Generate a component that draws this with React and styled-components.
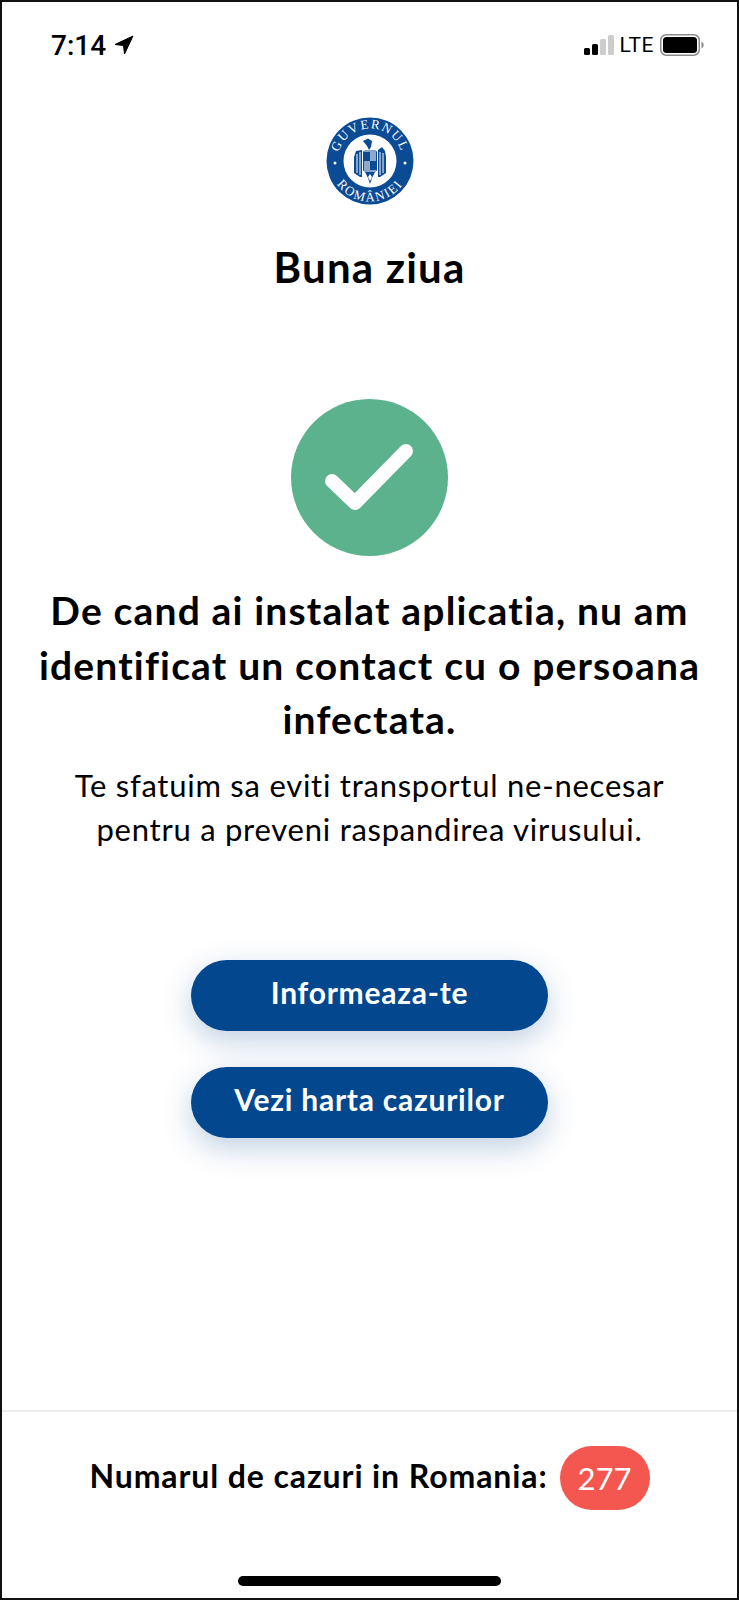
import React from "react";
import styled, { createGlobalStyle } from "styled-components";

const GlobalStyle = createGlobalStyle`
  html, body { margin: 0; padding: 0; background: #fff; }
  body { font-family: "Lato", "Open Sans", sans-serif; color: #000; }
`;

const Screen = styled.div`
  box-sizing: border-box;
  width: 739px;
  height: 1600px;
  border: 2px solid #111;
  display: flex;
  flex-direction: column;
  align-items: center;
  background: #fff;
  overflow: hidden;
`;

const StatusBar = styled.div`
  align-self: stretch;
  height: 54px;
  margin-top: 16px;
  padding: 0 33px 0 49px;
  display: flex;
  align-items: center;
  justify-content: space-between;
`;

const Clock = styled.div`
  display: flex;
  align-items: center;
  gap: 8px;
  font-family: "Roboto", sans-serif;
  font-size: 28px;
  font-weight: 500;
`;

const StatusRight = styled.div`
  display: flex;
  align-items: center;
  gap: 6px;
`;

const Signal = styled.div`
  display: flex;
  align-items: flex-end;
  gap: 2px;
  height: 20px;
`;

const SignalBar = styled.span`
  width: 6px;
  height: ${(p) => p.$h}px;
  border-radius: 1.5px;
  background: ${(p) => (p.$on ? "#000" : "#ccc")};
`;

const Lte = styled.span`
  font-family: "Roboto", sans-serif;
  font-size: 21px;
  letter-spacing: 0.5px;
`;

const Emblem = styled.svg`
  display: block;
  width: 88px;
  height: 88px;
  margin-top: 45px;
`;

const Title = styled.h1`
  margin: 36px 0 0;
  font-size: 42px;
  line-height: 52px;
  font-weight: 700;
  letter-spacing: 1.2px;
  text-align: center;
`;

const CheckBadge = styled.svg`
  display: block;
  width: 157px;
  height: 157px;
  margin-top: 106px;
`;

const Headline = styled.h2`
  margin: 27px 0 0;
  width: 715px;
  font-size: 39px;
  line-height: 54.5px;
  font-weight: 700;
  letter-spacing: 1.17px;
  text-align: center;
`;

const Advice = styled.p`
  margin: 16px 0 0;
  width: 625px;
  font-size: 31px;
  line-height: 44px;
  font-weight: 400;
  letter-spacing: 0.75px;
  text-align: center;
`;

const Buttons = styled.div`
  margin-top: 109px;
  display: flex;
  flex-direction: column;
  gap: 36px;
`;

const ActionButton = styled.button`
  width: 357px;
  height: 71px;
  padding: 0 0 6px;
  border: 0;
  border-radius: 36px;
  background: #03478f;
  color: #fff;
  font-family: inherit;
  font-size: 30px;
  font-weight: 700;
  letter-spacing: 0.75px;
  box-shadow: 0 10px 30px rgba(3, 71, 143, 0.25);
`;

const Footer = styled.div`
  margin-top: auto;
  align-self: stretch;
  height: 186px;
  border-top: 2px solid #ececec;
  display: flex;
  flex-direction: column;
  align-items: center;
`;

const CasesRow = styled.div`
  margin-top: 34px;
  display: flex;
  align-items: center;
  gap: 12px;
`;

const CasesLabel = styled.span`
  padding-bottom: 6px;
  font-size: 32px;
  font-weight: 700;
  letter-spacing: 0.9px;
`;

const CasesBadge = styled.span`
  width: 90px;
  height: 64px;
  border-radius: 32px;
  background: #f4574f;
  color: #fff;
  font-size: 31px;
  display: flex;
  align-items: center;
  justify-content: center;
`;

const HomeBar = styled.div`
  margin-top: 66px;
  width: 263px;
  height: 10px;
  border-radius: 5px;
  background: #000;
`;

const LocationArrow = () => (
  <svg width="20" height="20" viewBox="0 0 20 20">
    <path d="M19 1 L1 9.5 L9.5 10.5 L10.5 19 Z" fill="#000" stroke="#000" strokeWidth="1" strokeLinejoin="round" />
  </svg>
);

const Battery = () => (
  <svg width="44" height="22" viewBox="0 0 44 22">
    <rect x="0.75" y="0.75" width="38.5" height="20.5" rx="5.5" fill="none" stroke="#8a8a8a" strokeWidth="1.5" />
    <rect x="3" y="3" width="34" height="16" rx="3.5" fill="#000" />
    <path d="M41.5 7.5 C43.2 8.2 43.6 9.5 43.6 11 C43.6 12.5 43.2 13.8 41.5 14.5 Z" fill="#8a8a8a" />
  </svg>
);

const blue = "#0b4a94";

const GovEmblem = () => (
  <Emblem viewBox="0 0 88 88">
    <defs>
      <path id="arcTop" d="M 11.5 44 A 32.5 32.5 0 0 1 76.5 44" />
      <path id="arcBottom" d="M 3.5 44 A 40.5 40.5 0 0 0 84.5 44" />
    </defs>
    <circle cx="44" cy="44" r="43.5" fill={blue} />
    <circle cx="44" cy="44" r="26.5" fill="#fff" />
    <text fontFamily="Liberation Serif, serif" fontSize="13" fill="#fff" letterSpacing="1.6">
      <textPath href="#arcTop" startOffset="50%" textAnchor="middle">GUVERNUL</textPath>
    </text>
    <text fontFamily="Liberation Serif, serif" fontSize="13" fill="#fff" letterSpacing="1.6">
      <textPath href="#arcBottom" startOffset="50%" textAnchor="middle">ROMÂNIEI</textPath>
    </text>
    <circle cx="9" cy="46" r="1.5" fill="#fff" />
    <circle cx="79" cy="46" r="1.5" fill="#fff" />
    {/* eagle: head, wings with feathers, shield, tail */}
    <path d="M37 24 L42 21.5 L46 24 L45 30 L43 33 L41 29 Z" fill={blue} />
    <path d="M36 33 L30 34 L28 40 L28 56 L34 60 L36 60 Z M52 33 L56 30 L59 34 L60 40 L60 56 L54 60 L52 60 Z" fill={blue} />
    <path d="M31 37v19 M34 35v23 M54 35v23 M57 36v20" stroke="#fff" strokeWidth="1" fill="none" />
    <rect x="37.5" y="34" width="13" height="20" rx="1" fill="#fff" stroke={blue} strokeWidth="1" />
    <path d="M38 35h6v9h-6z M44 44h6v9h-6z" fill={blue} />
    <path d="M44 35h6v9h-6z M38 44h6v9h-6z" fill="#8ea9cc" />
    <path d="M39 55 L49 55 L46 61 L44 67 L42 61 Z" fill={blue} />
    <path d="M42 60 L44 57 L46 60 L44 64 Z" fill="#fff" />
  </Emblem>
);

const App = () => (
  <>
    <GlobalStyle />
    <Screen>
      <StatusBar>
        <Clock>
          7:14
          <LocationArrow />
        </Clock>
        <StatusRight>
          <Signal>
            <SignalBar $h={7} $on />
            <SignalBar $h={11} $on />
            <SignalBar $h={16} />
            <SignalBar $h={20} />
          </Signal>
          <Lte>LTE</Lte>
          <Battery />
        </StatusRight>
      </StatusBar>

      <GovEmblem />
      <Title>Buna ziua</Title>

      <CheckBadge viewBox="0 0 157 157">
        <circle cx="78.5" cy="78.5" r="78.5" fill="#5bb28c" />
        <path d="M41 82 L64 104 L115 52" fill="none" stroke="#fff" strokeWidth="14" strokeLinecap="round" strokeLinejoin="round" />
      </CheckBadge>

      <Headline>De cand ai instalat aplicatia, nu am identificat un contact cu o persoana infectata.</Headline>
      <Advice>Te sfatuim sa eviti transportul ne-necesar pentru a preveni raspandirea virusului.</Advice>

      <Buttons>
        <ActionButton>Informeaza-te</ActionButton>
        <ActionButton>Vezi harta cazurilor</ActionButton>
      </Buttons>

      <Footer>
        <CasesRow>
          <CasesLabel>Numarul de cazuri in Romania:</CasesLabel>
          <CasesBadge>277</CasesBadge>
        </CasesRow>
        <HomeBar />
      </Footer>
    </Screen>
  </>
);

export default App;
